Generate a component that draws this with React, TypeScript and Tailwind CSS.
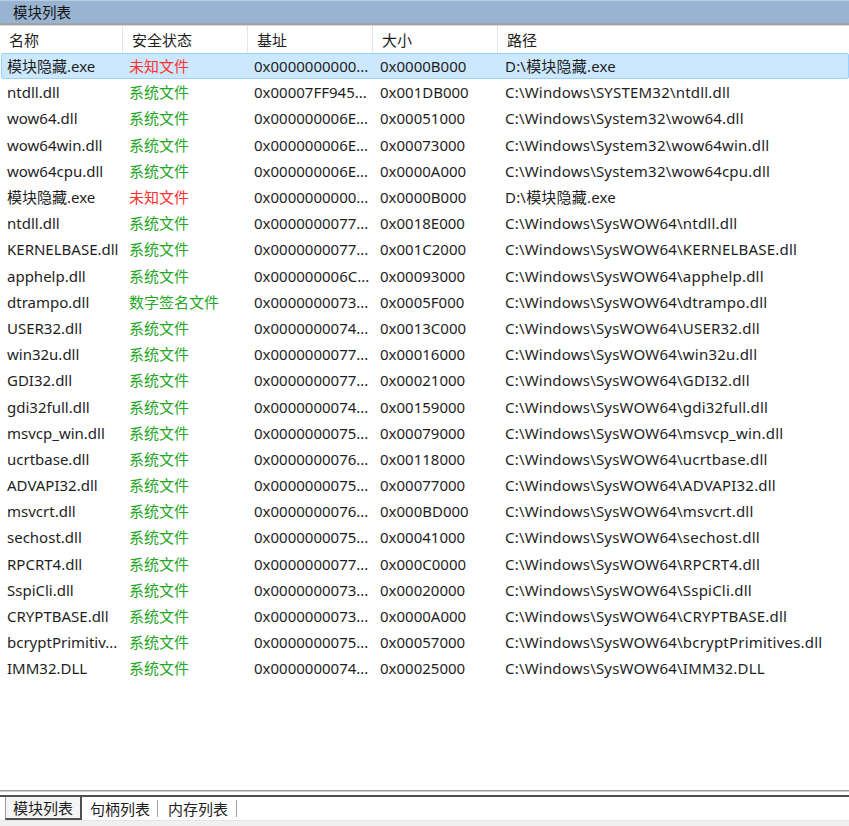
import React from "react";

type Row = {
  name: string;
  status: "unknown" | "system" | "signed";
  base: string;
  size: string;
  path: string;
};

const rows: Row[] = [
  { name: "模块隐藏.exe", status: "unknown", base: "0x0000000000...", size: "0x0000B000", path: "D:\\模块隐藏.exe" },
  { name: "ntdll.dll", status: "system", base: "0x00007FF945...", size: "0x001DB000", path: "C:\\Windows\\SYSTEM32\\ntdll.dll" },
  { name: "wow64.dll", status: "system", base: "0x000000006E...", size: "0x00051000", path: "C:\\Windows\\System32\\wow64.dll" },
  { name: "wow64win.dll", status: "system", base: "0x000000006E...", size: "0x00073000", path: "C:\\Windows\\System32\\wow64win.dll" },
  { name: "wow64cpu.dll", status: "system", base: "0x000000006E...", size: "0x0000A000", path: "C:\\Windows\\System32\\wow64cpu.dll" },
  { name: "模块隐藏.exe", status: "unknown", base: "0x0000000000...", size: "0x0000B000", path: "D:\\模块隐藏.exe" },
  { name: "ntdll.dll", status: "system", base: "0x0000000077...", size: "0x0018E000", path: "C:\\Windows\\SysWOW64\\ntdll.dll" },
  { name: "KERNELBASE.dll", status: "system", base: "0x0000000077...", size: "0x001C2000", path: "C:\\Windows\\SysWOW64\\KERNELBASE.dll" },
  { name: "apphelp.dll", status: "system", base: "0x000000006C...", size: "0x00093000", path: "C:\\Windows\\SysWOW64\\apphelp.dll" },
  { name: "dtrampo.dll", status: "signed", base: "0x0000000073...", size: "0x0005F000", path: "C:\\Windows\\SysWOW64\\dtrampo.dll" },
  { name: "USER32.dll", status: "system", base: "0x0000000074...", size: "0x0013C000", path: "C:\\Windows\\SysWOW64\\USER32.dll" },
  { name: "win32u.dll", status: "system", base: "0x0000000077...", size: "0x00016000", path: "C:\\Windows\\SysWOW64\\win32u.dll" },
  { name: "GDI32.dll", status: "system", base: "0x0000000077...", size: "0x00021000", path: "C:\\Windows\\SysWOW64\\GDI32.dll" },
  { name: "gdi32full.dll", status: "system", base: "0x0000000074...", size: "0x00159000", path: "C:\\Windows\\SysWOW64\\gdi32full.dll" },
  { name: "msvcp_win.dll", status: "system", base: "0x0000000075...", size: "0x00079000", path: "C:\\Windows\\SysWOW64\\msvcp_win.dll" },
  { name: "ucrtbase.dll", status: "system", base: "0x0000000076...", size: "0x00118000", path: "C:\\Windows\\SysWOW64\\ucrtbase.dll" },
  { name: "ADVAPI32.dll", status: "system", base: "0x0000000075...", size: "0x00077000", path: "C:\\Windows\\SysWOW64\\ADVAPI32.dll" },
  { name: "msvcrt.dll", status: "system", base: "0x0000000076...", size: "0x000BD000", path: "C:\\Windows\\SysWOW64\\msvcrt.dll" },
  { name: "sechost.dll", status: "system", base: "0x0000000075...", size: "0x00041000", path: "C:\\Windows\\SysWOW64\\sechost.dll" },
  { name: "RPCRT4.dll", status: "system", base: "0x0000000077...", size: "0x000C0000", path: "C:\\Windows\\SysWOW64\\RPCRT4.dll" },
  { name: "SspiCli.dll", status: "system", base: "0x0000000073...", size: "0x00020000", path: "C:\\Windows\\SysWOW64\\SspiCli.dll" },
  { name: "CRYPTBASE.dll", status: "system", base: "0x0000000073...", size: "0x0000A000", path: "C:\\Windows\\SysWOW64\\CRYPTBASE.dll" },
  { name: "bcryptPrimitiv...", status: "system", base: "0x0000000075...", size: "0x00057000", path: "C:\\Windows\\SysWOW64\\bcryptPrimitives.dll" },
  { name: "IMM32.DLL", status: "system", base: "0x0000000074...", size: "0x00025000", path: "C:\\Windows\\SysWOW64\\IMM32.DLL" },
];

const statusText = {
  unknown: "未知文件",
  system: "系统文件",
  signed: "数字签名文件",
};

const App = () => {
  return (
    <div className="w-[849px] h-[826px] flex flex-col bg-white text-[#1e1e1e] text-[15px] font-['Noto_Sans','Noto_Sans_CJK_SC',sans-serif] overflow-hidden">
      {/* title */}
      <div className="h-[23px] bg-[#98b4d2] border-t border-[#b9cde2] flex items-center pl-[13px] text-[14.5px] leading-[20px] text-[#141414]">
        模块列表
      </div>
      <div className="h-[2px] bg-[#a3a3a3]" />
      <div className="h-[1px] bg-[#d6d6d6]" />

      {/* header */}
      <div className="h-[27px] flex items-center leading-[20px]">
        <div className="w-[123px] h-full flex items-center pl-[9px] border-r border-[#e5e5e5]">名称</div>
        <div className="w-[125px] h-full flex items-center pl-[9px] border-r border-[#e5e5e5]">安全状态</div>
        <div className="w-[125px] h-full flex items-center pl-[9px] border-r border-[#e5e5e5]">基址</div>
        <div className="w-[125px] h-full flex items-center pl-[9px] border-r border-[#e5e5e5]">大小</div>
        <div className="flex-1 h-full flex items-center pl-[9px]">路径</div>
      </div>

      {/* rows */}
      <div className="flex-1 flex flex-col">
        {rows.map((r, i) => (
          <div
            key={i}
            className={`h-[26.2px] flex items-center leading-[20px] whitespace-nowrap ml-[1px] border ${
              i == 0 ? "bg-[#cce8ff] border-[#99d1ff] rounded-[2px]" : "border-transparent"
            }`}
          >
            <div className="w-[122px] pl-[5px]">{r.name}</div>
            <div
              className={`w-[125px] pl-[5px] ${
                r.status == "unknown" ? "text-[#ff3030]" : "text-[#25a525]"
              }`}
            >
              {statusText[r.status]}
            </div>
            <div className="w-[125px] pl-[5px]">{r.base}</div>
            <div className="w-[125px] pl-[6px]">{r.size}</div>
            <div className="flex-1 pl-[6px] tracking-[0.2px]">{r.path}</div>
          </div>
        ))}
      </div>

      {/* bottom tabs */}
      <div className="h-[1px] bg-[#9c9c9c]" />
      <div className="h-[1px] bg-[#cfcfcf]" />
      <div className="h-[3px]" />
      <div className="h-[2px] bg-[#4f4f4f]" />
      <div className="h-[23px] flex items-stretch pl-[5px] leading-[20px]">
        <div className="w-[77px] flex items-center pl-[7px] border-l border-[#9a9a9a] border-r-2 border-b-2 border-r-[#4f4f4f] border-b-[#4f4f4f] bg-[#f4f4f4]">
          模块列表
        </div>
        <div className="flex items-center pl-[8px] pr-[7px]">
          <span>句柄列表</span>
        </div>
        <div className="w-[1px] my-[3px] bg-[#a0a0a0]" />
        <div className="flex items-center pl-[10px] pr-[8px]">
          <span>内存列表</span>
        </div>
        <div className="w-[1px] my-[3px] bg-[#a0a0a0]" />
      </div>
      <div className="h-[6px] bg-[#f0f0f0] border-t border-[#e4e4e4]" />
    </div>
  );
};

export default App;
